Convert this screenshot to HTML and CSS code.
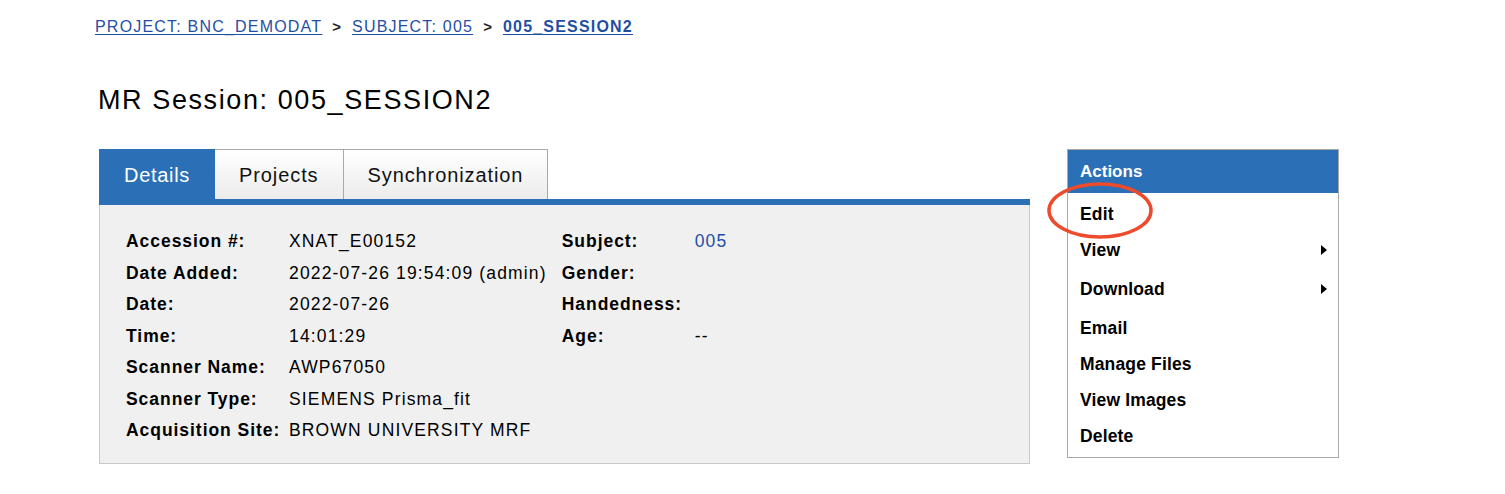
FILE: index.html
```html
<!DOCTYPE html>
<html lang="en">
<head>
<meta charset="utf-8">
<title>MR Session: 005_SESSION2</title>
<link rel="stylesheet" href="styles.css">
</head>
<body>
<div class="page">
  <nav class="crumbs">
    <a href="#">PROJECT: BNC_DEMODAT</a>
    <span class="sep">&gt;</span>
    <a href="#">SUBJECT: 005</a>
    <span class="sep">&gt;</span>
    <a href="#" class="current">005_SESSION2</a>
  </nav>

  <h1 class="title">MR Session: 005_SESSION2</h1>

  <div class="layout">
    <div class="main">
      <div class="tabs">
        <div class="tab active">Details</div>
        <div class="tab">Projects</div>
        <div class="tab">Synchronization</div>
      </div>
      <div class="panel">
        <dl class="info info-left">
          <dt>Accession #:</dt><dd>XNAT_E00152</dd>
          <dt>Date Added:</dt><dd>2022-07-26 19:54:09 (admin)</dd>
          <dt>Date:</dt><dd>2022-07-26</dd>
          <dt>Time:</dt><dd>14:01:29</dd>
          <dt>Scanner Name:</dt><dd>AWP67050</dd>
          <dt>Scanner Type:</dt><dd>SIEMENS Prisma_fit</dd>
          <dt>Acquisition Site:</dt><dd>BROWN UNIVERSITY MRF</dd>
        </dl>
        <dl class="info info-right">
          <dt>Subject:</dt><dd><a href="#">005</a></dd>
          <dt>Gender:</dt><dd></dd>
          <dt>Handedness:</dt><dd></dd>
          <dt>Age:</dt><dd>--</dd>
        </dl>
      </div>
    </div>

    <aside class="actions">
      <div class="actions-head">Actions</div>
      <ul class="actions-list">
        <li>Edit</li>
        <li class="sub">View<span class="arrow"></span></li>
        <li class="sub">Download<span class="arrow"></span></li>
        <li>Email</li>
        <li>Manage Files</li>
        <li>View Images</li>
        <li>Delete</li>
      </ul>
      <svg class="annotation" width="108" height="59" viewBox="0 0 108 59" aria-hidden="true">
        <ellipse cx="54" cy="29.5" rx="51" ry="26.5" fill="none" stroke="#ee4a2c" stroke-width="3.5"/>
      </svg>
    </aside>
  </div>
</div>
</body>
</html>
```

FILE: styles.css
```css
html, body {
  margin: 0;
  padding: 0;
  background: #ffffff;
}

body {
  font-family: "Liberation Sans", Arial, Helvetica, sans-serif;
  color: #000;
}

.page {
  padding: 17px 0 0 95px;
}

.crumbs {
  font-size: 16px;
  line-height: 20px;
  letter-spacing: 1.2px;
  display: flex;
  align-items: center;
  gap: 11px;
}

.crumbs a {
  color: #1f4fa3;
  text-decoration: underline;
  text-underline-offset: 2px;
}

.crumbs a.current {
  font-weight: bold;
  letter-spacing: 1.2px;
}

.crumbs .sep {
  font-size: 15px;
  font-weight: bold;
  color: #222;
  letter-spacing: 0;
  margin-left: -1px;
}

.title {
  margin: 47px 0 0 3px;
  font-size: 27px;
  line-height: 32px;
  font-weight: normal;
  letter-spacing: 1.6px;
}

.layout {
  display: flex;
  align-items: flex-start;
  gap: 37px;
  margin: 33px 0 0 4px;
}

.main {
  width: 931px;
}

.tabs {
  display: flex;
  border-bottom: 6px solid #2b70b6;
}

.tab {
  height: 49px;
  line-height: 50px;
  padding: 0 24px;
  font-size: 20px;
  letter-spacing: 0.9px;
  border: 1px solid #a9a9a9;
  border-bottom: none;
  border-left: none;
  background: linear-gradient(#ffffff, #ececec);
  color: #111;
}

.tab.active {
  background: #2b70b6;
  border-color: #2b70b6;
  color: #fff;
  letter-spacing: 0.7px;
  padding: 0 24px 0 25px;
}

.panel {
  display: flex;
  gap: 15px;
  background: #f0f0f0;
  border: 1px solid #c9c9c9;
  border-top: none;
  padding: 21px 26px 16px;
}

.info {
  display: grid;
  margin: 0;
  font-size: 17.5px;
  line-height: 31.5px;
  align-content: start;
}

.info-left {
  grid-template-columns: 163px auto;
}

.info-right {
  grid-template-columns: 133px auto;
}

.info dt {
  font-weight: bold;
  letter-spacing: 0.95px;
}

.info dd {
  margin: 0;
  letter-spacing: 1.15px;
  white-space: nowrap;
}

.info dd a {
  color: #1f4fa3;
  text-decoration: none;
}

.actions {
  position: relative;
  width: 270px;
  border: 1px solid #a9a9a9;
  background: #fff;
}

.actions-head {
  background: #2b70b6;
  color: #fff;
  font-weight: bold;
  font-size: 17px;
  height: 43px;
  line-height: 43px;
  padding-left: 12px;
}

.actions-list {
  list-style: none;
  margin: 0;
  padding: 3px 0;
}

.actions-list li {
  position: relative;
  padding-left: 12px;
  font-weight: bold;
  font-size: 17.5px;
  letter-spacing: 0.15px;
  line-height: 36px;
  height: 36px;
}

.actions-list li.sub {
  height: 39px;
}

.arrow {
  position: absolute;
  right: 11px;
  top: 13px;
  width: 0;
  height: 0;
  border-top: 5.5px solid transparent;
  border-bottom: 5.5px solid transparent;
  border-left: 6px solid #000;
}

.annotation {
  position: absolute;
  left: -22px;
  top: 31px;
  pointer-events: none;
}
```
